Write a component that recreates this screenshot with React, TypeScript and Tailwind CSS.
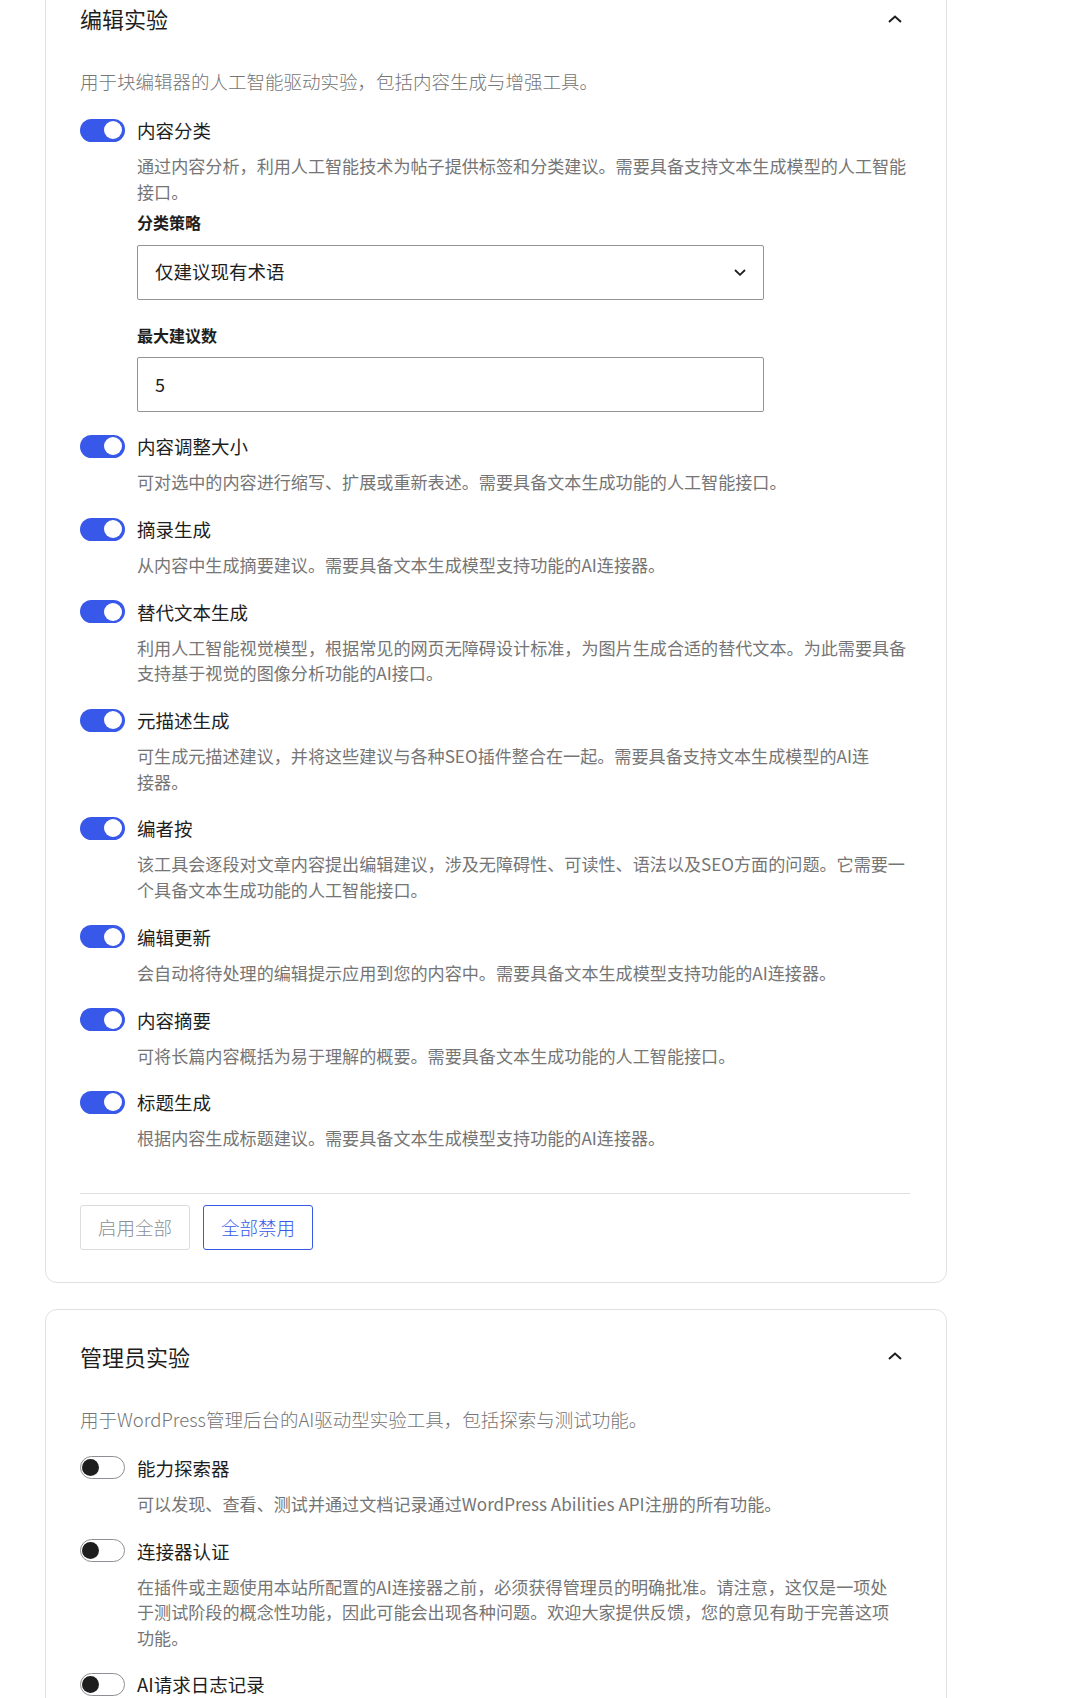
import type { ReactNode } from "react";

type Experiment = {
  title: string;
  on: boolean;
  desc: string[];
  extra?: ReactNode;
};

const ChevronUp = () => (
  <svg width="14" height="8" viewBox="0 0 14 8" fill="none" className="mr-[8px]">
    <path d="M1 7L7 1.5L13 7" stroke="#1e1e1e" strokeWidth="2" />
  </svg>
);

const ChevronDown = () => (
  <svg width="12" height="7" viewBox="0 0 12 7" fill="none">
    <path d="M1 1L6 5.8L11 1" stroke="#1e1e1e" strokeWidth="1.8" />
  </svg>
);

const Toggle = ({ on }: { on: boolean }) =>
  on ? (
    <span className="flex h-[23px] w-[45px] shrink-0 items-center justify-end rounded-full bg-[#3858e9] pr-[3px]">
      <span className="h-[18px] w-[18px] rounded-full bg-white" />
    </span>
  ) : (
    <span className="flex h-[23px] w-[45px] shrink-0 items-center rounded-full border border-[#8c8f94] bg-white pl-[1px]">
      <span className="h-[17px] w-[17px] rounded-full bg-[#1e1e1e]" />
    </span>
  );

const ClassifyFields = () => (
  <div className="pl-[57px]">
    <p className="mt-[8px] text-[16px] leading-[20px] font-bold text-[#1e1e1e]">分类策略</p>
    <div className="mt-[12.5px] flex h-[55px] w-[627px] items-center justify-between rounded-[2px] border border-[#949494] pl-[17px] pr-[17px]">
      <span className="text-[18.5px] text-[#1e1e1e]">仅建议现有术语</span>
      <ChevronDown />
    </div>
    <p className="mt-[25px] text-[16px] leading-[20px] font-bold text-[#1e1e1e]">最大建议数</p>
    <div className="mt-[12.5px] flex h-[55px] w-[627px] items-center rounded-[2px] border border-[#949494] pl-[17px]">
      <span className="text-[18px] text-[#1e1e1e]">5</span>
    </div>
  </div>
);

const editorExperiments: Experiment[] = [
  {
    title: "内容分类",
    on: true,
    desc: ["通过内容分析，利用人工智能技术为帖子提供标签和分类建议。需要具备支持文本生成模型的人工智能", "接口。"],
    extra: <ClassifyFields />,
  },
  { title: "内容调整大小", on: true, desc: ["可对选中的内容进行缩写、扩展或重新表述。需要具备文本生成功能的人工智能接口。"] },
  { title: "摘录生成", on: true, desc: ["从内容中生成摘要建议。需要具备文本生成模型支持功能的AI连接器。"] },
  {
    title: "替代文本生成",
    on: true,
    desc: ["利用人工智能视觉模型，根据常见的网页无障碍设计标准，为图片生成合适的替代文本。为此需要具备", "支持基于视觉的图像分析功能的AI接口。"],
  },
  {
    title: "元描述生成",
    on: true,
    desc: ["可生成元描述建议，并将这些建议与各种SEO插件整合在一起。需要具备支持文本生成模型的AI连", "接器。"],
  },
  {
    title: "编者按",
    on: true,
    desc: ["该工具会逐段对文章内容提出编辑建议，涉及无障碍性、可读性、语法以及SEO方面的问题。它需要一", "个具备文本生成功能的人工智能接口。"],
  },
  { title: "编辑更新", on: true, desc: ["会自动将待处理的编辑提示应用到您的内容中。需要具备文本生成模型支持功能的AI连接器。"] },
  { title: "内容摘要", on: true, desc: ["可将长篇内容概括为易于理解的概要。需要具备文本生成功能的人工智能接口。"] },
  { title: "标题生成", on: true, desc: ["根据内容生成标题建议。需要具备文本生成模型支持功能的AI连接器。"] },
];

const adminExperiments: Experiment[] = [
  { title: "能力探索器", on: false, desc: ["可以发现、查看、测试并通过文档记录通过WordPress Abilities API注册的所有功能。"] },
  {
    title: "连接器认证",
    on: false,
    desc: [
      "在插件或主题使用本站所配置的AI连接器之前，必须获得管理员的明确批准。请注意，这仅是一项处",
      "于测试阶段的概念性功能，因此可能会出现各种问题。欢迎大家提供反馈，您的意见有助于完善这项",
      "功能。",
    ],
  },
  { title: "AI请求日志记录", on: false, desc: [] },
];

const ExperimentRow = ({ item }: { item: Experiment }) => (
  <div className="mt-[22.3px] first:mt-[24px]">
    <div className="flex h-[24px] items-center gap-[12px]">
      <Toggle on={item.on} />
      <span className="text-[18.5px] leading-[24px] text-[#1e1e1e]">{item.title}</span>
    </div>
    {item.desc.length > 0 && (
      <div className="mt-[11px] pl-[57px] text-[17.1px] leading-[25.5px] text-[#757575]">
        {item.desc.map((line) => (
          <p key={line} className="whitespace-nowrap">{line}</p>
        ))}
      </div>
    )}
    {item.extra}
  </div>
);

const Card = ({
  title,
  intro,
  items,
  footer,
  className,
}: {
  title: string;
  intro: string;
  items: Experiment[];
  footer?: boolean;
  className: string;
}) => (
  <section className={`w-[902px] rounded-[12px] border border-[#e0e0e0] bg-white pt-[32px] pb-[32px] pl-[34px] pr-[36px] ${className}`}>
    <div className="flex h-[29px] items-center justify-between">
      <h2 className="text-[22px] leading-[29px] font-normal text-[#1e1e1e]">{title}</h2>
      <ChevronUp />
    </div>
    <p className="mt-[36px] text-[18.5px] leading-[25px] font-light text-[#757575]">{intro}</p>
    <div>
      {items.map((item) => (
        <ExperimentRow key={item.title} item={item} />
      ))}
    </div>
    {footer && (
      <>
        <div className="mt-[42px] h-px bg-[#e0e0e0]" />
        <div className="mt-[11px] flex gap-[13px]">
          <button className="h-[45px] w-[110px] rounded-[3px] border border-[#dcdcde] text-[18.5px] font-light text-[#8c8f94]">
            启用全部
          </button>
          <button className="h-[45px] w-[110px] rounded-[3px] border border-[#3858e9] text-[18.5px] font-light text-[#3858e9]">
            全部禁用
          </button>
        </div>
      </>
    )}
  </section>
);

const App = () => {
  return (
    <div className="h-[1698px] overflow-hidden bg-white pl-[45px] font-['Noto_Sans_CJK_SC',sans-serif]">
      <Card
        className="-mt-[29px]"
        title="编辑实验"
        intro="用于块编辑器的人工智能驱动实验，包括内容生成与增强工具。"
        items={editorExperiments}
        footer
      />
      <Card
        className="mt-[26px]"
        title="管理员实验"
        intro="用于WordPress管理后台的AI驱动型实验工具，包括探索与测试功能。"
        items={adminExperiments}
      />
    </div>
  );
};

export default App;
